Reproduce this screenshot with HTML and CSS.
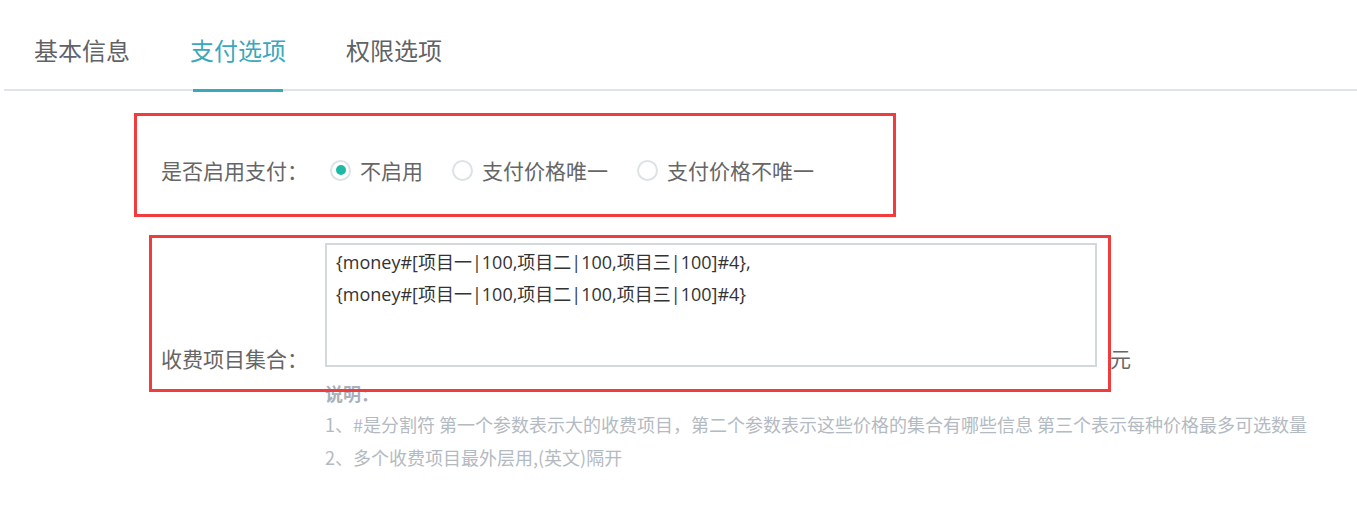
FILE: index.html
```html
<!DOCTYPE html>
<html lang="zh-CN">
<head>
    <meta charset="UTF-8">
    <meta name="viewport" content="width=device-width, initial-scale=1.0">
    <title>支付选项</title>
    <link rel="stylesheet" href="styles.css">
</head>
<body>
    <div class="page">
        <!-- 标签页 -->
        <ul class="tabs">
            <li class="tab">基本信息</li>
            <li class="tab active">支付选项</li>
            <li class="tab">权限选项</li>
        </ul>

        <!-- 支付表单 -->
        <div class="form">
            <div class="form-row pay-row">
                <label class="form-label">是否启用支付<span class="punct">：</span></label>
                <div class="radio-group">
                    <span class="radio checked"><i></i>不启用</span>
                    <span class="radio"><i></i>支付价格唯一</span>
                    <span class="radio"><i></i>支付价格不唯一</span>
                </div>
            </div>

            <div class="form-row items-row">
                <label class="form-label">收费项目集合<span class="punct">：</span></label>
                <textarea class="items-input">{money#[项目一|100,项目二|100,项目三|100]#4},
{money#[项目一|100,项目二|100,项目三|100]#4}</textarea>
                <span class="unit">元</span>
            </div>

            <div class="help">
                <p class="help-title">说明<span class="punct">：</span></p>
                <p>1、#是分割符 第一个参数表示大的收费项目<span class="punct">，</span>第二个参数表示这些价格的集合有哪些信息 第三个表示每种价格最多可选数量</p>
                <p>2、多个收费项目最外层用,(英文)隔开</p>
            </div>

            <!-- 标注框 -->
            <div class="mark mark-1"></div>
            <div class="mark mark-2"></div>
        </div>
    </div>
</body>
</html>
```

FILE: styles.css
```css
* {
    margin: 0;
    padding: 0;
    box-sizing: border-box;
}

body {
    background-color: #fff;
    font-family: 'Noto Sans CJK SC', 'Noto Sans', sans-serif;
    color: #666;
}

/* 居中的全角标点 */
.punct {
    font-family: 'Noto Sans CJK TC', 'Noto Sans CJK SC', sans-serif;
}

.page {
    padding: 0 0 0 4px;
}

/* 标签页 */
.tabs {
    list-style: none;
    display: flex;
    border-bottom: 2px solid #dfe5e8;
}

.tab {
    position: relative;
    padding: 30px 30px 19px;
    font-size: 24px;
    line-height: 40px;
    color: #5f6366;
}

.tab.active {
    color: #3aa8bc;
}

.tab.active::after {
    content: "";
    position: absolute;
    left: 33px;
    right: 33px;
    bottom: -3px;
    height: 3px;
    background-color: #3aa8bc;
}

/* 表单 */
.form {
    position: relative;
    padding: 64px 0 0 157px;
}

.form-row {
    display: flex;
}

.form-label {
    width: 164px;
    flex-shrink: 0;
    font-size: 21px;
    line-height: 30px;
    color: #666;
}

.pay-row {
    align-items: center;
}

.radio-group {
    display: flex;
    gap: 29px;
    padding-left: 5px;
}

.radio {
    display: flex;
    align-items: center;
    gap: 9px;
    font-size: 21px;
    line-height: 30px;
    color: #666;
}

.radio i {
    width: 21px;
    height: 21px;
    border: 2px solid #dde2e5;
    border-radius: 50%;
    display: flex;
    justify-content: center;
    align-items: center;
}

.radio.checked i::before {
    content: "";
    width: 10px;
    height: 10px;
    border-radius: 50%;
    background-color: #1cb9a5;
}

.items-row {
    margin-top: 58px;
    align-items: flex-end;
}

.items-row .form-label {
    line-height: 18px;
}

.items-input {
    width: 772px;
    height: 124px;
    border: 2px solid #d3d8db;
    padding: 1px 9px;
    font-family: 'Open Sans', 'Noto Sans CJK SC', sans-serif;
    font-size: 18px;
    line-height: 32px;
    color: #333;
    resize: none;
    outline: none;
}

.unit {
    margin-left: 13px;
    font-size: 21px;
    line-height: 18px;
    color: #666;
}

/* 说明 */
.help {
    padding-left: 164px;
    color: #b3bac1;
    font-size: 18px;
    line-height: 33px;
}

.help .help-title {
    margin-top: 11px;
    font-size: 18px;
    font-weight: 700;
    line-height: 30px;
    color: #aab1b8;
}

/* 红色标注框 */
.mark {
    position: absolute;
    border: 3px solid #f03c3c;
}

.mark-1 {
    left: 130px;
    top: 22px;
    width: 762px;
    height: 104px;
}

.mark-2 {
    left: 145px;
    top: 144px;
    width: 962px;
    height: 157px;
}
```
